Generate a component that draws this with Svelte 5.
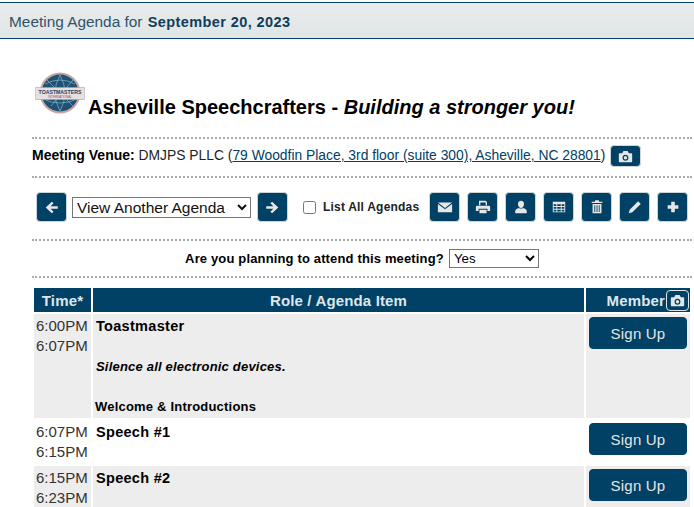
<script lang="ts">
  const tools = [
    { name: "Email", d: "M1 4h16L9 10zM1 5.500l8 6 8-6V15H1z" },
    { name: "Print", d: "M4.500 2H12l1.500 1.500V7H12V4H6v3H4.500zM2.500 7.500h13a1.500 1.500 0 0 1 1.500 1.500v4.500h-3V11H4v2.500H1V9a1.500 1.500 0 0 1 1.500-1.500zM5 12h8v4H5z" },
    { name: "Member", d: "M9 2a3.400 3.400 0 0 1 3.400 3.800C12.400 7.800 11 10 9 10S5.600 7.800 5.600 5.800A3.400 3.400 0 0 1 9 2zM2.500 16v-2.500C2.500 11.500 5 10.500 6.500 10c1.500 1 3.500 1 5 0 1.500.5 4 1.500 4 3.500V16z" },
    { name: "Grid", d: "M2 3h14v12H2zM3 6v2h3V6zm4 0v2h4V6zm5 0v2h3V6zM3 9v2h3V9zm4 0v2h4V9zm5 0v2h3V9zM3 12v2h3v-2zm4 0v2h4v-2zm5 0v2h3v-2z" },
    { name: "Delete", d: "M7 1.500h4l.6 1.500H15v1.500H3V3h3.400zM4 5.500h10V16H4zM6 7v7.500h1V7zm2.500 0v7.500h1V7zM11 7v7.500h1V7z" },
    { name: "Edit", d: "M12.500 2.500l3 3L6 15l-4 1 1-4z" },
    { name: "Add", d: "M7 3h4v4h4v4h-4v4H7v-4H3V7h4z" },
  ];

  const rows = [
    { from: "6:00PM", to: "6:07PM", role: "Toastmaster", shaded: true, first: true },
    { from: "6:07PM", to: "6:15PM", role: "Speech #1", shaded: false, first: false },
    { from: "6:15PM", to: "6:23PM", role: "Speech #2", shaded: true, first: false },
  ];
</script>

{#snippet camera()}
  <svg viewBox="0 0 18 18" width="15" height="15" fill="currentColor">
    <path fill-rule="evenodd" d="M6.500 2.500h5L13 5h3a1 1 0 0 1 1 1v9a1 1 0 0 1-1 1H2a1 1 0 0 1-1-1V6a1 1 0 0 1 1-1h3zM9 7a3.500 3.500 0 1 0 0 7 3.500 3.500 0 0 0 0-7zm0 1.500a2 2 0 1 1 0 4 2 2 0 0 1 0-4z" />
  </svg>
{/snippet}

<div class="page">
  <header class="topbar">Meeting Agenda for <b>September 20, 2023</b></header>

  <main class="content">
    <div class="club">
      <svg class="logo" viewBox="0 0 50 42" width="50" height="42">
        <circle cx="25" cy="21" r="20.500" fill="#c9a3a3" />
        <circle cx="25" cy="21" r="18.500" fill="#1d5272" />
        <path d="M10 12q15-8 30 0M8 27q17 8 34 0M25 3q-10 18 0 36M25 3q10 18 0 36M12 8l26 26M38 8L16 34" fill="none" stroke="#8fb0c4" stroke-width=".7" />
        <rect x="0" y="15.500" width="50" height="12" rx="1" fill="#e6dfe0" stroke="#b99a9e" stroke-width=".6" />
        <text x="25" y="21.500" text-anchor="middle" class="logo-main">TOASTMASTERS</text>
        <text x="25" y="26" text-anchor="middle" class="logo-sub">INTERNATIONAL</text>
      </svg>
      <h1>Asheville Speechcrafters - <i>Building a stronger you!</i></h1>
    </div>

    <div class="venue section">
      <span><b>Meeting Venue:</b> DMJPS PLLC (<a href="#venue">79 Woodfin Place, 3rd floor (suite 300), Asheville, NC 28801</a>)</span>
      <button class="btn cam" aria-label="Photos">{@render camera()}</button>
    </div>

    <div class="toolbar section">
      <button class="btn tool" aria-label="Previous">
        <svg viewBox="0 0 18 18" width="15" height="15" fill="currentColor"><path d="M9.500 2l2 2-3.500 3.500h8.500v3H8l3.500 3.500-2 2L2 9z" /></svg>
      </button>
      <select class="agenda">
        <option>View Another Agenda</option>
      </select>
      <button class="btn tool" aria-label="Next">
        <svg viewBox="0 0 18 18" width="15" height="15" fill="currentColor"><path d="M8.500 2l-2 2L10 7.500H1.500v3H10L6.500 14l2 2L16 9z" /></svg>
      </button>
      <label class="all"><input type="checkbox" /> List All Agendas</label>
      <div class="tools">
        {#each tools as t}
          <button class="btn tool" aria-label={t.name}>
            <svg viewBox="0 0 18 18" width="16" height="16" fill="currentColor" fill-rule="evenodd"><path d={t.d} /></svg>
          </button>
        {/each}
      </div>
    </div>

    <div class="attend section">
      <b>Are you planning to attend this meeting?</b>
      <select class="yes"><option>Yes</option></select>
    </div>

    <table class="agenda-table">
      <thead>
        <tr>
          <th class="time">Time*</th>
          <th>Role / Agenda Item</th>
          <th class="member">
            <span class="member-head">Member <span class="mini">{@render camera()}</span></span>
          </th>
        </tr>
      </thead>
      <tbody>
        {#each rows as r}
          <tr class:shaded={r.shaded}>
            <td class="time">{r.from}<br />{r.to}</td>
            <td class="role">
              <div class="role-name">{r.role}</div>
              {#if r.first}
                <p class="note"><i>Silence all electronic devices.</i></p>
                <p class="welcome">Welcome &amp; Introductions</p>
              {/if}
            </td>
            <td class="member"><button class="btn signup">Sign Up</button></td>
          </tr>
        {/each}
      </tbody>
    </table>
  </main>
</div>

<style>
  :global(body) {
    margin: 0;
    background: #fff;
    font-family: "Liberation Sans", Arial, sans-serif;
    color: #000;
  }
  .page {
    height: 507px;
    overflow: hidden;
    padding-top: 2px;
    box-sizing: border-box;
  }
  .topbar {
    height: 35px;
    line-height: 37px;
    padding-left: 9px;
    border-top: 1px solid #004165;
    border-bottom: 1px solid #004165;
    background: linear-gradient(#e8ecec, #e0e5e5);
    color: #30536a;
    font-size: 15.400px;
    white-space: nowrap;
  }
  .topbar b {
    color: #0f3d5c;
    margin-left: 1px;
    font-size: 14.500px;
    letter-spacing: .4px;
  }
  .content {
    padding: 32px 2px 0 32px;
  }
  .club {
    display: flex;
    align-items: flex-end;
    gap: 3px;
    height: 48px;
    padding: 0 0 0 3px;
  }
  .logo {
    flex: none;
    margin-bottom: 5px;
  }
  .logo-main {
    font: bold 5.200px "Liberation Sans", sans-serif;
    fill: #24405c;
  }
  .logo-sub {
    font: 3px "Liberation Sans", sans-serif;
    fill: #a04a5a;
  }
  h1 {
    margin: 0;
    font-size: 20px;
    line-height: 23px;
    font-weight: bold;
    white-space: nowrap;
  }
  .section {
    border-top: 2px dotted #aaa;
  }
  .club + .section {
    margin-top: 18px;
  }
  .venue {
    display: flex;
    align-items: center;
    gap: 5px;
    height: 32px;
    padding-bottom: 5px;
    font-size: 13.850px;
    white-space: nowrap;
    color: #222;
  }
  .venue b {
    color: #000;
    font-size: 14px;
  }
  .venue a {
    color: #004165;
  }
  .btn {
    border: 1px solid #cfd6da;
    border-radius: 4px;
    background: #004165;
    color: #e6e6e6;
    padding: 0;
    display: inline-flex;
    align-items: center;
    justify-content: center;
    box-sizing: border-box;
    font-family: inherit;
  }
  .cam {
    width: 31px;
    height: 22px;
    margin-top: 2px;
  }
  .toolbar {
    display: flex;
    align-items: center;
    height: 58px;
    padding: 0 0 3px 4px;
  }
  .tool {
    width: 31px;
    height: 30px;
    flex: none;
  }
  .agenda {
    width: 179px;
    height: 21px;
    margin: 0 6px 0 5px;
    font: 15.500px "Liberation Sans", sans-serif;
    color: #111;
    background: #fff;
    padding: 0;
  }
  .all {
    display: flex;
    align-items: center;
    gap: 7px;
    margin-left: 15px;
    font-size: 12px;
    font-weight: bold;
    letter-spacing: .2px;
    white-space: nowrap;
    color: #222;
  }
  .all input {
    margin: 0;
    width: 13px;
    height: 13px;
  }
  .tools {
    display: flex;
    gap: 7px;
    margin-left: 10px;
  }
  .attend {
    display: flex;
    align-items: center;
    justify-content: center;
    gap: 5px;
    height: 35px;
    font-size: 13px;
    letter-spacing: .15px;
    border-bottom: 2px dotted #aaa;
  }
  .yes {
    width: 90px;
    height: 19px;
    font: 13.300px "Liberation Sans", sans-serif;
    background: #fff;
    padding: 0;
  }
  .agenda-table {
    margin-top: 8px;
    width: 660px;
    table-layout: fixed;
    border-collapse: separate;
    border-spacing: 2px;
  }
  th {
    height: 24px;
    padding: 0;
    background: #004165;
    color: #dfe6ea;
    font-size: 15px;
    font-weight: bold;
    letter-spacing: .15px;
  }
  th.time {
    width: 57px;
  }
  th.member {
    width: 104px;
  }
  .member-head {
    display: flex;
    align-items: center;
    justify-content: flex-end;
    gap: 1px;
    padding-right: 1px;
  }
  .mini {
    width: 23px;
    height: 21px;
    border: 1px solid #dfe6ea;
    border-radius: 4px;
    display: inline-flex;
    align-items: center;
    justify-content: center;
    box-sizing: border-box;
  }
  td {
    padding: 0;
    vertical-align: top;
  }
  tr.shaded td {
    background: #ededed;
  }
  td.time {
    padding: 2px 0 0 2px;
    font-size: 15px;
    line-height: 20px;
    color: #333;
    white-space: nowrap;
  }
  .role {
    padding: 3px 3px 2px;
    font-size: 14.500px;
    font-weight: bold;
  }
  .role-name {
    line-height: 18px;
    letter-spacing: .3px;
  }
  .note {
    margin: 23px 0 0;
    font-size: 13px;
    line-height: 18px;
    letter-spacing: .2px;
  }
  .welcome {
    margin: 22px 0 0 -1px;
    font-size: 13px;
    line-height: 18px;
    letter-spacing: .2px;
  }
  td.member {
    padding: 3px 3px 9px;
  }
  .signup {
    width: 98px;
    height: 32px;
    font-size: 15px;
    letter-spacing: .2px;
    border-color: #004165;
  }
</style>
